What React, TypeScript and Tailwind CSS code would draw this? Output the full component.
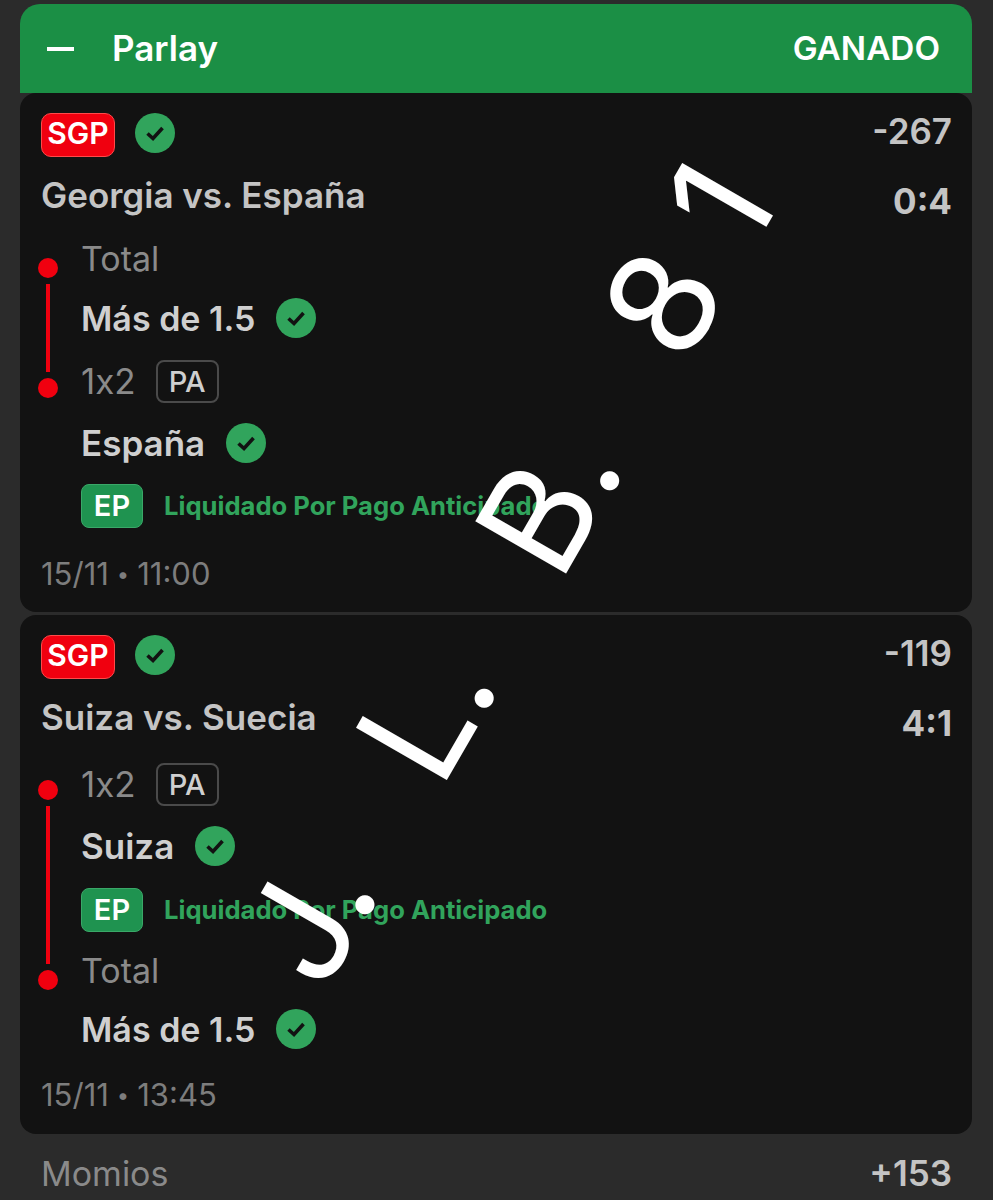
import React from "react";

const Check = ({ className = "" }: { className?: string }) => (
  <svg viewBox="0 0 40 40" className={`w-10 h-10 shrink-0 ${className}`}>
    <circle cx="20" cy="20" r="20" fill="#31a45c" />
    <path d="M12.5 20.5 L18 25.5 L27.5 15" fill="none" stroke="#121212" strokeWidth="3.6" />
  </svg>
);

const Sgp = () => (
  <span className="flex items-center justify-center w-[74px] h-11 pb-1 rounded-[10px] bg-[#f0000f] border border-[#ff4a4a] text-white text-[30px] font-semibold">SGP</span>
);

const Label = ({ text, className = "" }: { text: string; className?: string }) => (
  <div className={`flex items-center h-10 text-[34px] text-[#8a8a8a] ${className}`}>{text}</div>
);

const Pick = ({ text, size, className = "" }: { text: string; size: string; className?: string }) => (
  <div className={`flex items-center gap-[21px] h-10 font-semibold text-[#cfcfcf] ${size} ${className}`}>
    <span>{text}</span>
    <Check />
  </div>
);

const Pa = ({ className = "" }: { className?: string }) => (
  <div className={`flex items-center gap-5 h-[43px] text-[35px] text-[#8a8a8a] ${className}`}>
    <span className="[font-feature-settings:'calt'_0]">1x2</span>
    <span className="flex items-center justify-center w-[63px] h-[43px] rounded-lg border-2 border-[#4a4a4a] text-[#cfcfcf] text-[29px] font-medium">PA</span>
  </div>
);

const Ep = ({ className = "" }: { className?: string }) => (
  <div className={`flex items-center gap-[21px] h-11 ${className}`}>
    <span className="flex items-center justify-center w-[62px] h-11 rounded-lg bg-[#1f9350] border border-[#3aa868] text-white text-[29px] font-semibold">EP</span>
    <span className="text-[25.6px] font-bold text-[#31a45c]">Liquidado Por Pago Anticipado</span>
  </div>
);

const Rail = ({ line, className = "" }: { line: string; className?: string }) => (
  <div className={`flex flex-col items-center w-5 mr-[23px] -ml-[3px] shrink-0 ${className}`}>
    <span className="w-5 h-5 rounded-full bg-[#f0000f]" />
    <span className={`w-1 my-1.5 bg-[#f0000f] ${line}`} />
    <span className="w-5 h-5 rounded-full bg-[#f0000f]" />
  </div>
);

const Head = ({ odds, title, score }: { odds: string; title: string; score: string }) => (
  <>
    <div className="flex items-start justify-between h-11">
      <div className="flex items-start gap-5">
        <Sgp />
        <Check />
      </div>
      <span className="text-[35px] leading-9 font-semibold text-[#c4c4c4]">{odds}</span>
    </div>
    <div className="flex items-center justify-between h-11 mt-4 font-semibold text-[#c4c4c4]">
      <span className="text-[35px]">{title}</span>
      <span className="text-[35px] font-bold pt-3">{score}</span>
    </div>
  </>
);

const When = ({ day, time }: { day: string; time: string }) => (
  <div className="flex items-center h-10 mt-[26px] text-[31px] text-[#7d7d7d]">
    {day}
    <span className="mx-2 text-[22px]">•</span>
    {time}
  </div>
);

export default function App() {
  return (
    <div className="relative h-[1200px] overflow-hidden bg-[#2b2b2b] pl-5 pr-[21px] pt-1 font-['Inter',sans-serif]">
      <div className="flex items-center justify-between h-[89px] rounded-t-[20px] bg-[#1b8f45] pl-[27px] pr-[32px] text-white font-semibold">
        <div className="flex items-center gap-[38px]">
          <span className="w-[27px] h-1 bg-white" />
          <span className="text-[35px]">Parlay</span>
        </div>
        <span className="text-[33.3px]">GANADO</span>
      </div>

      <section className="h-[519px] rounded-2xl bg-[#121212] pl-[21px] pr-5 pt-5">
        <Head odds="-267" title="Georgia vs. España" score="0:4" />
        <div className="flex mt-[21px]">
          <Rail line="h-[88px]" className="pt-5" />
          <div>
            <Label text="Total" />
            <Pick text="Más de 1.5" size="text-[34px]" className="mt-5" />
            <Pa className="mt-[22px]" />
            <Pick text="España" size="text-[35px]" className="mt-5" />
            <Ep className="mt-[21px]" />
          </div>
        </div>
        <When day="15/11" time="11:00" />
      </section>

      <section className="mt-[3px] h-[519px] rounded-2xl bg-[#121212] pl-[21px] pr-5 pt-5">
        <Head odds="-119" title="Suiza vs. Suecia" score="4:1" />
        <div className="flex mt-6">
          <Rail line="h-[158px]" className="pt-[17px]" />
          <div>
            <Pa />
            <Pick text="Suiza" size="text-[35px]" className="mt-5" />
            <Ep className="mt-[22px]" />
            <Label text="Total" className="mt-[18px]" />
            <Pick text="Más de 1.5" size="text-[34px]" className="mt-[19px]" />
          </div>
        </div>
        <When day="15/11" time="13:45" />
      </section>

      <div className="flex items-center justify-between h-[78px] pl-[21px] pr-5">
        <span className="text-[34px] text-[#8a8a8a]">Momios</span>
        <span className="text-[35px] font-semibold text-[#c4c4c4]">+153</span>
      </div>

      <span className="absolute left-[216px] top-[932px] origin-top-left -rotate-[60deg] whitespace-pre text-white text-[144px] leading-none [word-spacing:75px]">
        J. L. B. 8<span className="ml-[40px]">1</span>
      </span>
    </div>
  );
}
